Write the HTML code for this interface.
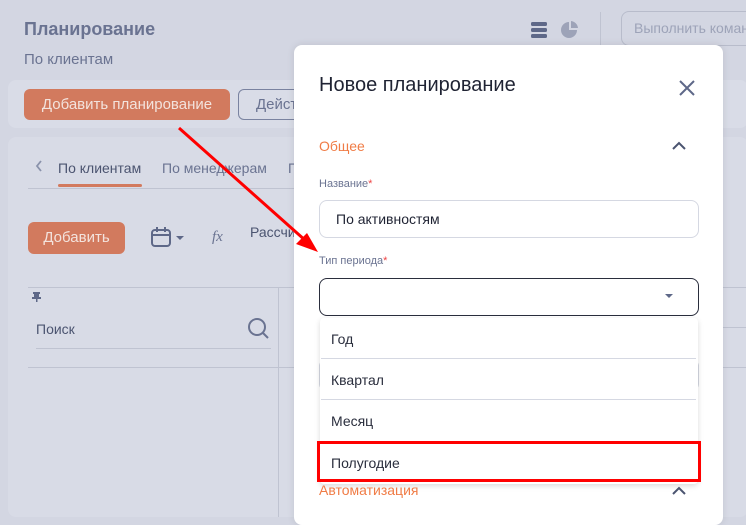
<!DOCTYPE html>
<html><head><meta charset="utf-8"><style>
*{box-sizing:border-box;margin:0;padding:0}
body{width:746px;height:510px;overflow:hidden;background:#d3d6e2;font-family:"Liberation Sans","DejaVu Sans",sans-serif;position:relative}
.a{position:absolute}
</style></head><body>
<div class="a" style="left:8px;top:80px;width:740px;height:48px;background:#d9dce7;border-radius:8px"></div>
<div class="a" style="left:8px;top:137px;width:740px;height:380px;background:#d8dbe6;border-radius:8px"></div>
<div class="a" style="left:24px;top:19px;font-size:18px;font-weight:bold;color:#6a7391">Планирование</div>
<div class="a" style="left:24px;top:51px;font-size:15px;color:#6a7391">По клиентам</div>
<div class="a" style="left:24px;top:89px;width:206px;height:31px;background:#d27a5e;border-radius:6px;color:#f3e3dd;font-size:15px;line-height:31px;text-align:center">Добавить планирование</div>
<div class="a" style="left:238px;top:89px;width:80px;height:31px;border:1px solid #7a83a0;border-radius:6px;color:#6a7391;font-size:15px;line-height:29px;padding-left:17px">Действия</div>
<svg class="a" style="left:34px;top:159px" width="10" height="14"><path d="M7 2L3 7L7 12" fill="none" stroke="#8a92ab" stroke-width="1.8"/></svg>
<div class="a" style="left:58px;top:160px;color:#4b5470;font-size:14px">По клиентам</div>
<div class="a" style="left:58px;top:184px;width:84px;height:3px;background:#d27a5e;border-radius:2px"></div>
<div class="a" style="left:162px;top:160px;color:#6a7391;font-size:14px">По менеджерам</div>
<div class="a" style="left:288px;top:160px;color:#6a7391;font-size:14px">П</div>
<div class="a" style="left:28px;top:188px;width:270px;height:1px;background:#bfc3d1"></div>
<div class="a" style="left:28px;top:222px;width:97px;height:32px;background:#d27a5e;border-radius:6px;color:#f3e3dd;font-size:15px;line-height:32px;text-align:center">Добавить</div>
<svg class="a" style="left:150px;top:226px" width="40" height="24"><rect x="2" y="4" width="18" height="16" rx="3" fill="none" stroke="#5e6888" stroke-width="2"/><line x1="2" y1="9" x2="20" y2="9" stroke="#5e6888" stroke-width="2"/><line x1="7" y1="1" x2="7" y2="6" stroke="#5e6888" stroke-width="2"/><line x1="15" y1="1" x2="15" y2="6" stroke="#5e6888" stroke-width="2"/><path d="M26 10h8l-4 4z" fill="#5e6888"/></svg>
<div class="a" style="left:212px;top:229px;font-family:'Liberation Serif',serif;font-style:italic;color:#6a7391;font-size:15px">fx</div>
<div class="a" style="left:250px;top:224px;color:#4b5470;font-size:14px">Рассчитать</div>
<div class="a" style="left:28px;top:287px;width:270px;height:1px;background:#bfc3d1"></div>
<div class="a" style="left:28px;top:367px;width:270px;height:1px;background:#bfc3d1"></div>
<div class="a" style="left:278px;top:287px;width:1px;height:230px;background:#bfc3d1"></div>
<svg class="a" style="left:32px;top:291px" width="10" height="12"><rect x="1" y="1" width="7" height="2" fill="#5e6888"/><rect x="2" y="2" width="5" height="5" fill="#5e6888"/><rect x="0" y="6" width="9" height="2" fill="#5e6888"/><rect x="4" y="7" width="1.5" height="4" fill="#5e6888"/></svg>
<div class="a" style="left:36px;top:321px;color:#4b5470;font-size:14px">Поиск</div>
<svg class="a" style="left:246px;top:316px" width="26" height="26"><circle cx="11" cy="11" r="8" fill="none" stroke="#6a7391" stroke-width="2"/><line x1="17" y1="17" x2="22" y2="22" stroke="#6a7391" stroke-width="2"/></svg>
<div class="a" style="left:36px;top:348px;width:235px;height:1px;background:#bfc3d1"></div>
<div class="a" style="left:723px;top:287px;width:23px;height:1px;background:#bfc3d1"></div>
<div class="a" style="left:723px;top:327px;width:23px;height:1px;background:#bfc3d1"></div>
<div class="a" style="left:723px;top:367px;width:23px;height:1px;background:#bfc3d1"></div>
<svg class="a" style="left:528px;top:18px" width="24" height="24"><rect x="3" y="4" width="16" height="4" rx="1.5" fill="#5e6888"/><rect x="3" y="10" width="16" height="4" rx="1.5" fill="#5e6888"/><rect x="3" y="16" width="16" height="4" rx="1.5" fill="#5e6888"/></svg>
<svg class="a" style="left:558px;top:18px" width="24" height="24"><path d="M11 4A8 8 0 1 0 19 12H11z" fill="#9da3b8"/><path d="M13 3A8 8 0 0 1 20 10H13z" fill="#9da3b8"/></svg>
<div class="a" style="left:600px;top:12px;width:1px;height:34px;background:#bfc3d1"></div>
<div class="a" style="left:621px;top:11px;width:140px;height:35px;border:1px solid #b8bccb;border-radius:8px;color:#9da3b8;font-size:14px;line-height:33px;padding-left:12px;white-space:nowrap">Выполнить команду</div>

<div class="a" style="left:294px;top:45px;width:429px;height:480px;background:#fff;border-radius:8px;box-shadow:0 0 8px rgba(0,0,0,.1)"></div>
<div class="a" style="left:319px;top:74px;font-size:20px;color:#1f2333">Новое планирование</div>
<svg class="a" style="left:678px;top:79px" width="18" height="18"><path d="M2 2L16 16M16 2L2 16" stroke="#5e6888" stroke-width="2"/></svg>
<div class="a" style="left:319px;top:138px;color:#f07c46;font-size:14px">Общее</div>
<svg class="a" style="left:671px;top:140px" width="16" height="12"><path d="M2 9L8 3L14 9" fill="none" stroke="#4b5470" stroke-width="2"/></svg>
<div class="a" style="left:319px;top:178px;color:#6a7391;font-size:11px">Название<span style="color:#e44">*</span></div>
<div class="a" style="left:319px;top:200px;width:380px;height:38px;border:1px solid #d5d8e2;border-radius:8px;font-size:14px;color:#1f2333;line-height:36px;padding-left:16px">По активностям</div>
<div class="a" style="left:319px;top:255px;color:#6a7391;font-size:11px">Тип периода<span style="color:#e44">*</span></div>
<div class="a" style="left:319px;top:278px;width:380px;height:38px;border:1px solid #2a2e3d;border-radius:8px"></div>
<svg class="a" style="left:664px;top:292px" width="10" height="8"><path d="M1 2h8l-4 4z" fill="#5e6888"/></svg>
<div class="a" style="left:319px;top:360px;width:380px;height:30px;border:1px solid #d5d8e2;border-radius:6px"></div>
<div class="a" style="left:320px;top:318px;width:378px;height:166px;background:#fff;box-shadow:0 2px 6px rgba(0,0,0,.15);border-radius:4px"></div>
<div class="a" style="left:331px;top:331px;font-size:14px;color:#2a2e3d">Год</div>
<div class="a" style="left:321px;top:358px;width:375px;height:1px;background:#d5d8e2"></div>
<div class="a" style="left:331px;top:372px;font-size:14px;color:#2a2e3d">Квартал</div>
<div class="a" style="left:321px;top:399px;width:375px;height:1px;background:#d5d8e2"></div>
<div class="a" style="left:331px;top:413px;font-size:14px;color:#2a2e3d">Месяц</div>
<div class="a" style="left:331px;top:455px;font-size:14px;color:#2a2e3d">Полугодие</div>
<div class="a" style="left:317px;top:441px;width:384px;height:41px;border:3px solid #ff0000"></div>
<div class="a" style="left:319px;top:482px;color:#f07c46;font-size:14px">Автоматизация</div>
<svg class="a" style="left:671px;top:485px" width="16" height="12"><path d="M2 9L8 3L14 9" fill="none" stroke="#4b5470" stroke-width="2"/></svg>
<svg class="a" style="left:0;top:0" width="746" height="510"><line x1="179" y1="128" x2="306" y2="241" stroke="#f00" stroke-width="3"/><path d="M318 252L296 244L307 233z" fill="#f00"/></svg>
</body></html>
